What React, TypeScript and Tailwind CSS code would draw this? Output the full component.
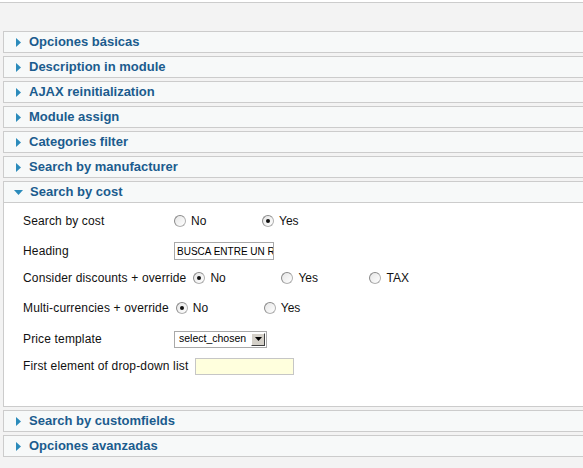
import React from "react";

const FONT = { fontFamily: '"Liberation Sans", Arial, sans-serif' };

const BEFORE = [
  "Opciones básicas",
  "Description in module",
  "AJAX reinitialization",
  "Module assign",
  "Categories filter",
  "Search by manufacturer",
];
const AFTER = ["Search by customfields", "Opciones avanzadas"];

function Arrow({ open }: { open?: boolean }) {
  return open ? (
    <svg width="9" height="5" viewBox="0 0 9 5" className="shrink-0" aria-hidden>
      <path d="M0 0h9L4.5 5z" fill="#2b8bbb" />
    </svg>
  ) : (
    <svg width="5" height="9" viewBox="0 0 5 9" className="shrink-0" aria-hidden>
      <path d="M0 0v9l5-4.5z" fill="#2b8bbb" />
    </svg>
  );
}

function Header({ title, open }: { title: string; open?: boolean }) {
  return (
    <div
      className={`flex h-[20px] items-center bg-[#f7f9f9] ${
        open ? "box-content gap-[7px] pl-[10px] border-b border-[#cccccc]" : "gap-[8px] pl-[12px]"
      }`}
    >
      <Arrow open={open} />
      <span className="text-[13px] font-bold text-[#1b5c8e]">{title}</span>
    </div>
  );
}

function Panel({ title }: { title: string }) {
  return (
    <div className="mb-[3px] border-y border-l border-[#cccccc]">
      <Header title={title} />
    </div>
  );
}

function Radio({ checked }: { checked?: boolean }) {
  return (
    <span className="flex h-[12px] w-[12px] shrink-0 items-center justify-center rounded-full border border-[#b0b0b0] border-t-[#8a8a8a] border-l-[#8a8a8a] bg-gradient-to-br from-[#e6e6e6] to-white">
      {checked && <span className="h-[4px] w-[4px] rounded-full bg-[#111]" />}
    </span>
  );
}

function RadioGroup({ options, selected }: { options: string[]; selected: number }) {
  return (
    <div className="flex">
      {options.map((o, i) => (
        <label key={o} className="flex w-[88px] items-center gap-[5px]">
          <Radio checked={i === selected} />
          <span>{o}</span>
        </label>
      ))}
    </div>
  );
}

function Row({ label, h, children }: { label: string; h: string; children: React.ReactNode }) {
  return (
    <div className={`flex items-center ${h}`}>
      <span className="min-w-[151px] pr-[7px] tracking-[0.15px]">{label}</span>
      {children}
    </div>
  );
}

export default function App() {
  return (
    <div className="h-[468px] w-[583px] overflow-hidden bg-white pt-[2px]" style={FONT}>
      <div className="h-full border-t border-[#cccccc] bg-[#f3f3f3] pl-[3px] pt-[28px]">
        {BEFORE.map((t) => (
          <Panel key={t} title={t} />
        ))}

        {/* Search by cost, open */}
        <div className="mb-[3px] border-y border-l border-[#cccccc]">
          <Header title="Search by cost" open />
          <div className="h-[203px] bg-white pl-[19px] pt-[2px] text-[12px] text-[#111]">
            <Row label="Search by cost" h="h-[31px]">
              <RadioGroup options={["No", "Yes"]} selected={1} />
            </Row>
            <Row label="Heading" h="h-[30px]">
              <div className="flex h-[18px] w-[100px] items-center overflow-hidden whitespace-nowrap border border-[#a9a9a9] bg-white pl-[2px] text-[10px] text-black">
                BUSCA ENTRE UN R
              </div>
            </Row>
            <Row label="Consider discounts + override" h="h-[24px]">
              <RadioGroup options={["No", "Yes", "TAX"]} selected={0} />
            </Row>
            <Row label="Multi-currencies + override" h="h-[36px]">
              <RadioGroup options={["No", "Yes"]} selected={0} />
            </Row>
            <Row label="Price template" h="h-[26px]">
              <div className="flex h-[17px] w-[93px] items-center justify-between border border-[#a9a9a9] bg-white pl-[4px] pr-[1px] text-[10.5px] text-black">
                <span>select_chosen</span>
                <span className="flex h-[13px] w-[14px] items-center justify-center border border-[#ffffff] border-b-[#404040] border-r-[#404040] bg-[#d4d0c8]">
                  <svg width="7" height="4" viewBox="0 0 7 4" aria-hidden>
                    <path d="M0 0h7L3.5 4z" fill="#000" />
                  </svg>
                </span>
              </div>
            </Row>
            <Row label="First element of drop-down list" h="h-[28px]">
              <div className="h-[17px] w-[99px] border border-[#c6c6c6] bg-[#ffffdd]" />
            </Row>
          </div>
        </div>

        {AFTER.map((t) => (
          <Panel key={t} title={t} />
        ))}
      </div>
    </div>
  );
}
